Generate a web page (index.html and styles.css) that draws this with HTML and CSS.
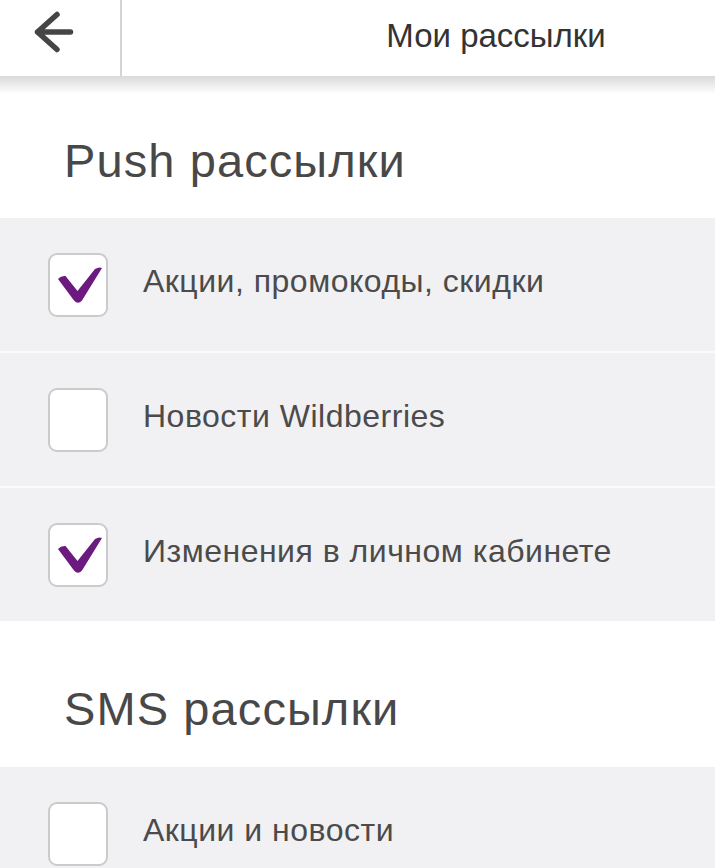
FILE: index.html
```html
<!DOCTYPE html>
<html lang="ru">
<head>
  <meta charset="UTF-8">
  <meta name="viewport" content="width=device-width, initial-scale=1">
  <title>Мои рассылки</title>
  <link rel="stylesheet" href="styles.css">
</head>
<body>

  <header class="top-bar">
    <button class="back-btn" aria-label="Назад">
      <svg width="42" height="48" viewBox="0 0 42 48">
        <path d="M24 6.5 L4.5 24 L24 41.5 M4.5 24 H37.5" fill="none" stroke="#454545" stroke-width="5.5" stroke-linecap="round" stroke-linejoin="round"/>
      </svg>
    </button>
    <div class="top-title">Мои рассылки</div>
  </header>

  <section class="group">
    <h2 class="group-title">Push рассылки</h2>
    <div class="option">
      <span class="check">
        <svg class="tick" width="57" height="60" viewBox="0 0 57 60"><path d="M8 24 Q11 20.5 15.5 21 L27.5 36 L45 14 Q49 11.5 52 13 L32 45.5 Q28 50 24 45.5 Z" fill="#6c1a80"/></svg>
      </span>
      <span class="option-label">Акции, промокоды, скидки</span>
    </div>
    <div class="option">
      <span class="check"></span>
      <span class="option-label">Новости Wildberries</span>
    </div>
    <div class="option">
      <span class="check">
        <svg class="tick" width="57" height="60" viewBox="0 0 57 60"><path d="M8 24 Q11 20.5 15.5 21 L27.5 36 L45 14 Q49 11.5 52 13 L32 45.5 Q28 50 24 45.5 Z" fill="#6c1a80"/></svg>
      </span>
      <span class="option-label">Изменения в личном кабинете</span>
    </div>
  </section>

  <section class="group">
    <h2 class="group-title sms">SMS рассылки</h2>
    <div class="option">
      <span class="check"></span>
      <span class="option-label">Акции и новости</span>
    </div>
  </section>

</body>
</html>
```

FILE: styles.css
```css
* {
  box-sizing: border-box;
}

body {
  font-family: 'Liberation Sans', Arial, sans-serif;
  background: #fff;
  color: #4a4a4a;
  margin: 0;
  padding: 0;
}

.top-bar {
  display: flex;
  height: 76px;
  background: #fff;
  position: relative;
}

/* soft shadow under the bar */
.top-bar::after {
  content: "";
  position: absolute;
  left: 0;
  right: 0;
  top: 76px;
  height: 18px;
  background: linear-gradient(#d9d9d9, rgba(255,255,255,0));
}

.back-btn {
  width: 122px;
  height: 76px;
  border: none;
  border-right: 2px solid #d4d4d4;
  background: none;
  padding: 8px 0 0 33px;
  display: flex;
  align-items: flex-start;
}

.top-title {
  flex: 1;
  display: flex;
  align-items: center;
  justify-content: center;
  padding: 0 0 4px 155px;
  font-size: 33px;
  color: #333;
}

.group-title {
  margin: 0;
  height: 142px;
  padding: 57px 0 0 64px;
  font-size: 47px;
  font-weight: normal;
  color: #484848;
  letter-spacing: 1.1px;
}

.group-title.sms {
  height: 146px;
  padding-top: 60px;
}

.option {
  display: flex;
  align-items: center;
  height: 135px;
  background: #f1f0f3;
  border-bottom: 2px solid #faf9fb;
  padding-left: 48px;
}

.option:last-child {
  height: 133px;
  border-bottom: none;
}

.check {
  width: 60px;
  height: 64px;
  border: 2px solid #cbcbce;
  border-radius: 9px;
  background: #fff;
  flex-shrink: 0;
  margin-top: 1px;
}

.tick {
  display: block;
}

.option-label {
  margin: 0 0 6px 35px;
  font-size: 32px;
  letter-spacing: 0.5px;
  color: #4b4b4b;
}
```
